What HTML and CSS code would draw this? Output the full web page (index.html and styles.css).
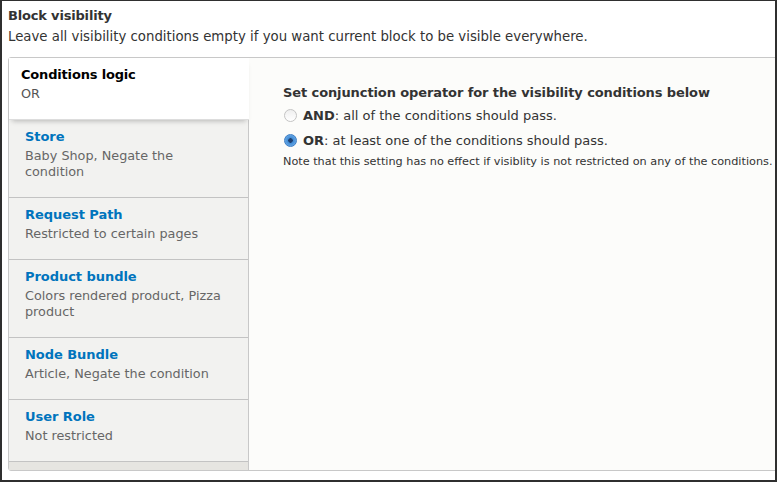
FILE: index.html
```html
<!DOCTYPE html>
<html>
<head>
<meta charset="utf-8">
<link rel="stylesheet" href="styles.css">
</head>
<body>
<div class="frame">
  <div class="label">Block visibility</div>
  <div class="desc">Leave all visibility conditions empty if you want current block to be visible everywhere.</div>
  <div class="vtabs">
    <ul class="menu">
      <li class="item selected"><a><strong class="t">Conditions logic</strong><span class="s">OR</span></a></li>
      <li class="item"><a><strong class="t">Store</strong><span class="s">Baby Shop, Negate the condition</span></a></li>
      <li class="item"><a><strong class="t">Request Path</strong><span class="s">Restricted to certain pages</span></a></li>
      <li class="item"><a><strong class="t">Product bundle</strong><span class="s">Colors rendered product, Pizza product</span></a></li>
      <li class="item"><a><strong class="t">Node Bundle</strong><span class="s">Article, Negate the condition</span></a></li>
      <li class="item"><a><strong class="t">User Role</strong><span class="s">Not restricted</span></a></li>
    </ul>
    <div class="pane">
      <div class="pane-title">Set conjunction operator for the visibility conditions below</div>
      <label class="radio"><span class="r"></span><span><b>AND</b>: all of the conditions should pass.</span></label>
      <label class="radio"><span class="r checked"></span><span><b>OR</b>: at least one of the conditions should pass.</span></label>
      <div class="note">Note that this setting has no effect if visiblity is not restricted on any of the conditions.</div>
    </div>
  </div>
</div>
</body>
</html>
```
FILE: styles.css
```css
html, body {
  margin: 0;
  padding: 0;
  background: #fff;
}
body {
  font-family: "DejaVu Sans", sans-serif;
  font-size: 13px;
  color: #333;
}
.frame {
  box-sizing: border-box;
  width: 777px;
  height: 482px;
  border: 2px solid #2f2f2f;
  border-top-width: 1px;
  padding: 5px 0 0 6px;
  overflow: hidden;
  background: #fff;
}
.label {
  font-weight: bold;
  letter-spacing: -0.18px;
  line-height: 20px;
}
.desc {
  font-size: 13.3px;
  line-height: 22px;
  white-space: nowrap;
}
.vtabs {
  margin-top: 9px;
  width: 800px;
  display: flex;
  border: 1px solid #c8c8c8;
  border-radius: 3px 0 0 3px;
  background: #fcfcfa;
}
.menu {
  list-style: none;
  margin: 0;
  padding: 0 0 8px 0;
  width: 239px;
  flex: none;
  background: #e6e5e1;
  border-right: 1px solid #c8c8c8;
}
.item {
  background: #f2f2f0;
  border-bottom: 1px solid #c3c3c3;
}
.item a {
  display: flex;
  flex-direction: column;
  padding: 7px 12px 17px 16px;
}
.t {
  color: #0074bd;
  line-height: 20px;
  letter-spacing: -0.05px;
}
.s {
  color: #666;
  font-size: 12.8px;
  line-height: 16px;
  margin-top: 1px;
}
.selected {
  background: #fff;
  border-bottom: 1px solid #ddd;
  box-shadow: 0 4px 5px -3px rgba(0,0,0,0.25);
  position: relative;
  margin-right: -1px;
}
.selected a {
  padding-left: 12px;
}
.selected .t {
  color: #000;
  letter-spacing: -0.18px;
}
.selected .s {
  color: #555;
}
.pane {
  flex: 1;
  padding: 25px 0 0 34px;
  background: #fcfcfa;
}
.pane-title {
  font-weight: bold;
  letter-spacing: -0.1px;
  line-height: 20px;
}
.radio {
  display: flex;
  align-items: center;
  gap: 6px;
  height: 25px;
  line-height: 20px;
}
.r {
  box-sizing: border-box;
  width: 13px;
  height: 13px;
  border-radius: 50%;
  border: 1px solid #c4c4c4;
  background: linear-gradient(#efefef, #ffffff);
  margin-left: 1px;
}
.r.checked {
  border: 1px solid #3d7ec4;
  background: radial-gradient(circle, #1e3f70 0 2px, #3f8ad4 2.5px, #6aa9e6 6px);
}
.note {
  font-size: 11.25px;
  color: #333;
  line-height: 18px;
  white-space: nowrap;
}
```
